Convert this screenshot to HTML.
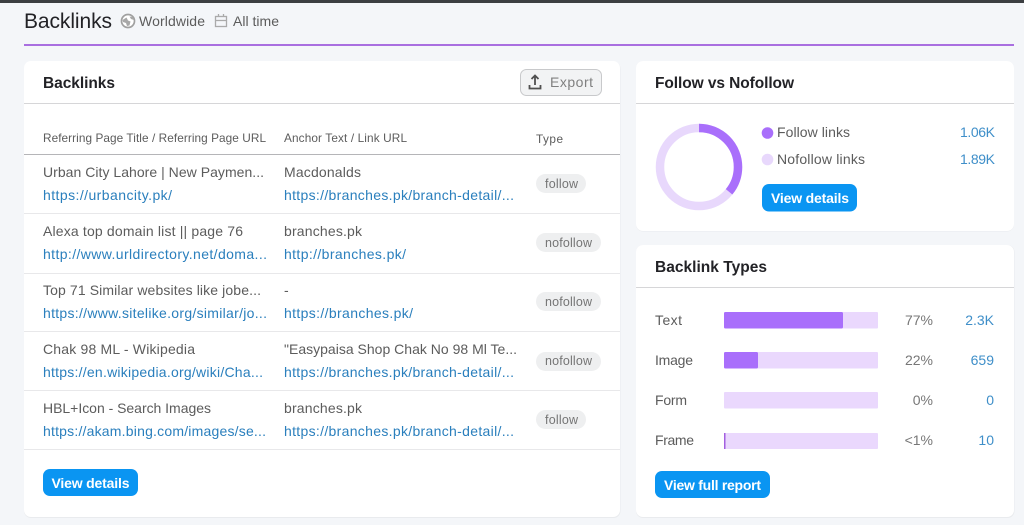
<!DOCTYPE html>
<html><head><meta charset="utf-8"><title>Backlinks</title>
<style>
html,body{margin:0;padding:0;background:#f4f6f9;width:1024px;height:525px;overflow:hidden}
svg{display:block;filter:blur(0.3px)}
text{font-family:"Liberation Sans",sans-serif;font-size:14px;fill:#5c5c5c;white-space:pre}
.u{fill:#2a7fbd}
.h{font-size:15.5px;font-weight:bold;fill:#222226}
.th{font-size:11.8px;fill:#5c5c5c}
.b{font-size:12.5px;fill:#757575}
.w{font-size:14px;font-weight:bold;fill:#fff}
.n{fill:#3f8fc9}
.p{fill:#777}
</style></head><body>
<svg width="1024" height="525" viewBox="0 0 1024 525" xmlns="http://www.w3.org/2000/svg">
<rect width="1024" height="525" fill="#f4f6f9"/>
<rect width="1024" height="3" fill="#3c3f42"/>

<text x="24" y="28" style="font-size:21px;fill:#222226" textLength="88" lengthAdjust="spacing">Backlinks</text>
<circle cx="128" cy="21" r="6.500" fill="#fff" stroke="#a0a0a0" stroke-width="1.700"/>
<path d="M122.500 20l4-2.500 1.500 3 2.500 1-1 4-2.500.5-1-3-3-1zM129.500 16.500l3 .5 1.500 3-3-1z" fill="#a8a8a8"/>
<text x="139" y="26" textLength="66" lengthAdjust="spacing">Worldwide</text>
<rect x="215.500" y="16.500" width="11" height="10" fill="none" stroke="#aaa" stroke-width="1.300"/>
<path d="M215.500 20.500h11M218.500 14v3M223.500 14v3" fill="none" stroke="#aaa" stroke-width="1.300"/>
<text x="233" y="26" textLength="46" lengthAdjust="spacing">All time</text>
<rect x="24" y="44" width="990" height="2" fill="#a96fe0"/>

<!-- left card -->
<rect x="24" y="61.500" width="596.500" height="456.500" rx="7" fill="#e9ebee"/>
<rect x="24" y="61" width="596" height="456" rx="7" fill="#fff"/>
<rect x="24" y="103" width="596" height="1" fill="#d6d6d8"/>
<text class="h" x="43" y="88" textLength="72" lengthAdjust="spacing">Backlinks</text>
<rect x="520.500" y="69.500" width="81" height="26" rx="6" fill="#f2f3f4" stroke="#c8c9cb"/>
<path d="M535 85v-9.500M531.500 79l3.500-3.500 3.500 3.500M529.500 85v3.500h11V85" fill="none" stroke="#505050" stroke-width="1.800"/>
<text x="550" y="87" style="fill:#808080" textLength="43" lengthAdjust="spacing">Export</text>

<text class="th" x="43" y="142" textLength="223" lengthAdjust="spacing">Referring Page Title / Referring Page URL</text>
<text class="th" x="284" y="142" textLength="123" lengthAdjust="spacing">Anchor Text / Link URL</text>
<text class="th" x="536" y="143" textLength="27" lengthAdjust="spacing">Type</text>
<rect x="24" y="154" width="596" height="1" fill="#b5b5b8"/>

<text x="43" y="177" textLength="221" lengthAdjust="spacing">Urban City Lahore | New Paymen...</text>
<text class="u" x="43" y="200" textLength="129" lengthAdjust="spacing">https://urbancity.pk/</text>
<text x="284" y="177" textLength="77" lengthAdjust="spacing">Macdonalds</text>
<text class="u" x="284" y="200" textLength="230" lengthAdjust="spacing">https://branches.pk/branch-detail/...</text>
<rect x="536" y="174" width="50" height="19" rx="9.500" fill="#eeeff0"/>
<text class="b" x="545" y="188" textLength="33" lengthAdjust="spacing">follow</text>
<rect x="24" y="213" width="596" height="1" fill="#e8e8ea"/>

<text x="43" y="236" textLength="200" lengthAdjust="spacing">Alexa top domain list || page 76</text>
<text class="u" x="43" y="259" textLength="224" lengthAdjust="spacing">http://www.urldirectory.net/doma...</text>
<text x="284" y="236" textLength="78" lengthAdjust="spacing">branches.pk</text>
<text class="u" x="284" y="259" textLength="122" lengthAdjust="spacing">http://branches.pk/</text>
<rect x="536" y="233" width="65" height="19" rx="9.500" fill="#eeeff0"/>
<text class="b" x="545" y="247" textLength="47" lengthAdjust="spacing">nofollow</text>
<rect x="24" y="273" width="596" height="1" fill="#e8e8ea"/>

<text x="43" y="295" textLength="218" lengthAdjust="spacing">Top 71 Similar websites like jobe...</text>
<text class="u" x="43" y="318" textLength="224" lengthAdjust="spacing">https://www.sitelike.org/similar/jo...</text>
<text x="284" y="295">-</text>
<text class="u" x="284" y="318" textLength="129" lengthAdjust="spacing">https://branches.pk/</text>
<rect x="536" y="292" width="65" height="19" rx="9.500" fill="#eeeff0"/>
<text class="b" x="545" y="306" textLength="47" lengthAdjust="spacing">nofollow</text>
<rect x="24" y="331" width="596" height="1" fill="#e8e8ea"/>

<text x="43" y="354" textLength="152" lengthAdjust="spacing">Chak 98 ML - Wikipedia</text>
<text class="u" x="43" y="377" textLength="220" lengthAdjust="spacing">https://en.wikipedia.org/wiki/Cha...</text>
<text x="284" y="354" textLength="233" lengthAdjust="spacing">"Easypaisa Shop Chak No 98 Ml Te...</text>
<text class="u" x="284" y="377" textLength="230" lengthAdjust="spacing">https://branches.pk/branch-detail/...</text>
<rect x="536" y="352" width="65" height="19" rx="9.500" fill="#eeeff0"/>
<text class="b" x="545" y="365" textLength="47" lengthAdjust="spacing">nofollow</text>
<rect x="24" y="390" width="596" height="1" fill="#e8e8ea"/>

<text x="43" y="413" textLength="168" lengthAdjust="spacing">HBL+Icon - Search Images</text>
<text class="u" x="43" y="436" textLength="223" lengthAdjust="spacing">https://akam.bing.com/images/se...</text>
<text x="284" y="413" textLength="78" lengthAdjust="spacing">branches.pk</text>
<text class="u" x="284" y="436" textLength="230" lengthAdjust="spacing">https://branches.pk/branch-detail/...</text>
<rect x="536" y="410" width="50" height="19" rx="9.500" fill="#eeeff0"/>
<text class="b" x="545" y="424" textLength="33" lengthAdjust="spacing">follow</text>
<rect x="24" y="449" width="596" height="1" fill="#e8e8ea"/>

<rect x="43" y="469" width="95" height="27" rx="7" fill="#0a95f2"/>
<text class="w" x="51.500" y="488" textLength="78" lengthAdjust="spacing">View details</text>

<!-- follow card -->
<rect x="636" y="61" width="378" height="170.500" rx="7" fill="#e9ebee"/>
<rect x="636" y="61" width="378" height="170" rx="7" fill="#fff"/>
<rect x="636" y="103" width="378" height="1" fill="#d6d6d8"/>
<text class="h" x="655" y="88" textLength="139" lengthAdjust="spacing">Follow vs Nofollow</text>
<circle cx="699" cy="167" r="39" fill="none" stroke="#e8d8fc" stroke-width="8.500"/>
<circle cx="699" cy="167" r="39" fill="none" stroke="#a96ffb" stroke-width="8.500" pathLength="100" stroke-dasharray="36 64" transform="rotate(-90 699 167)"/>
<circle cx="767.500" cy="133" r="5.800" fill="#a96ffb"/>
<circle cx="767.500" cy="159.500" r="5.800" fill="#e8d8fc"/>
<text x="777" y="137" textLength="73" lengthAdjust="spacing">Follow links</text>
<text x="777" y="164" textLength="88" lengthAdjust="spacing">Nofollow links</text>
<text class="n" x="960" y="137" textLength="35" lengthAdjust="spacing">1.06K</text>
<text class="n" x="960" y="164" textLength="35" lengthAdjust="spacing">1.89K</text>
<rect x="762" y="184" width="95" height="27.500" rx="7" fill="#0a95f2"/>
<text class="w" x="771" y="203" textLength="78" lengthAdjust="spacing">View details</text>

<!-- types card -->
<rect x="636" y="245" width="378.500" height="273" rx="7" fill="#e9ebee"/>
<rect x="636" y="245" width="378" height="272" rx="7" fill="#fff"/>
<rect x="636" y="287" width="378" height="1" fill="#d6d6d8"/>
<text class="h" x="655" y="272" textLength="112" lengthAdjust="spacing">Backlink Types</text>

<text x="655" y="325" textLength="27" lengthAdjust="spacing">Text</text>
<rect x="724" y="312" width="154" height="16.500" rx="1" fill="#ead8fd"/>
<rect x="724" y="312" width="119" height="16.500" rx="1.500" fill="#a96ffb"/>
<text class="p" x="933" y="325" text-anchor="end">77%</text>
<text class="n" x="994" y="325" text-anchor="end">2.3K</text>

<text x="655" y="365" textLength="38" lengthAdjust="spacing">Image</text>
<rect x="724" y="352" width="154" height="16.500" rx="1" fill="#ead8fd"/>
<rect x="724" y="352" width="34" height="16.500" rx="1.500" fill="#a96ffb"/>
<text class="p" x="933" y="365" text-anchor="end">22%</text>
<text class="n" x="994" y="365" text-anchor="end">659</text>

<text x="655" y="405" textLength="32" lengthAdjust="spacing">Form</text>
<rect x="724" y="392" width="154" height="16.500" rx="1" fill="#ead8fd"/>
<text class="p" x="933" y="405" text-anchor="end">0%</text>
<text class="n" x="994" y="405" text-anchor="end">0</text>

<text x="655" y="445" textLength="39" lengthAdjust="spacing">Frame</text>
<rect x="724" y="433" width="154" height="16" rx="1" fill="#ead8fd"/>
<rect x="724" y="433" width="1.500" height="16" fill="#a35fe0"/>
<text class="p" x="933" y="445" text-anchor="end">&lt;1%</text>
<text class="n" x="994" y="445" text-anchor="end">10</text>

<rect x="655" y="471" width="115" height="27" rx="7" fill="#0a95f2"/>
<text class="w" x="664" y="490" textLength="97" lengthAdjust="spacing">View full report</text>
</svg>
</body></html>
